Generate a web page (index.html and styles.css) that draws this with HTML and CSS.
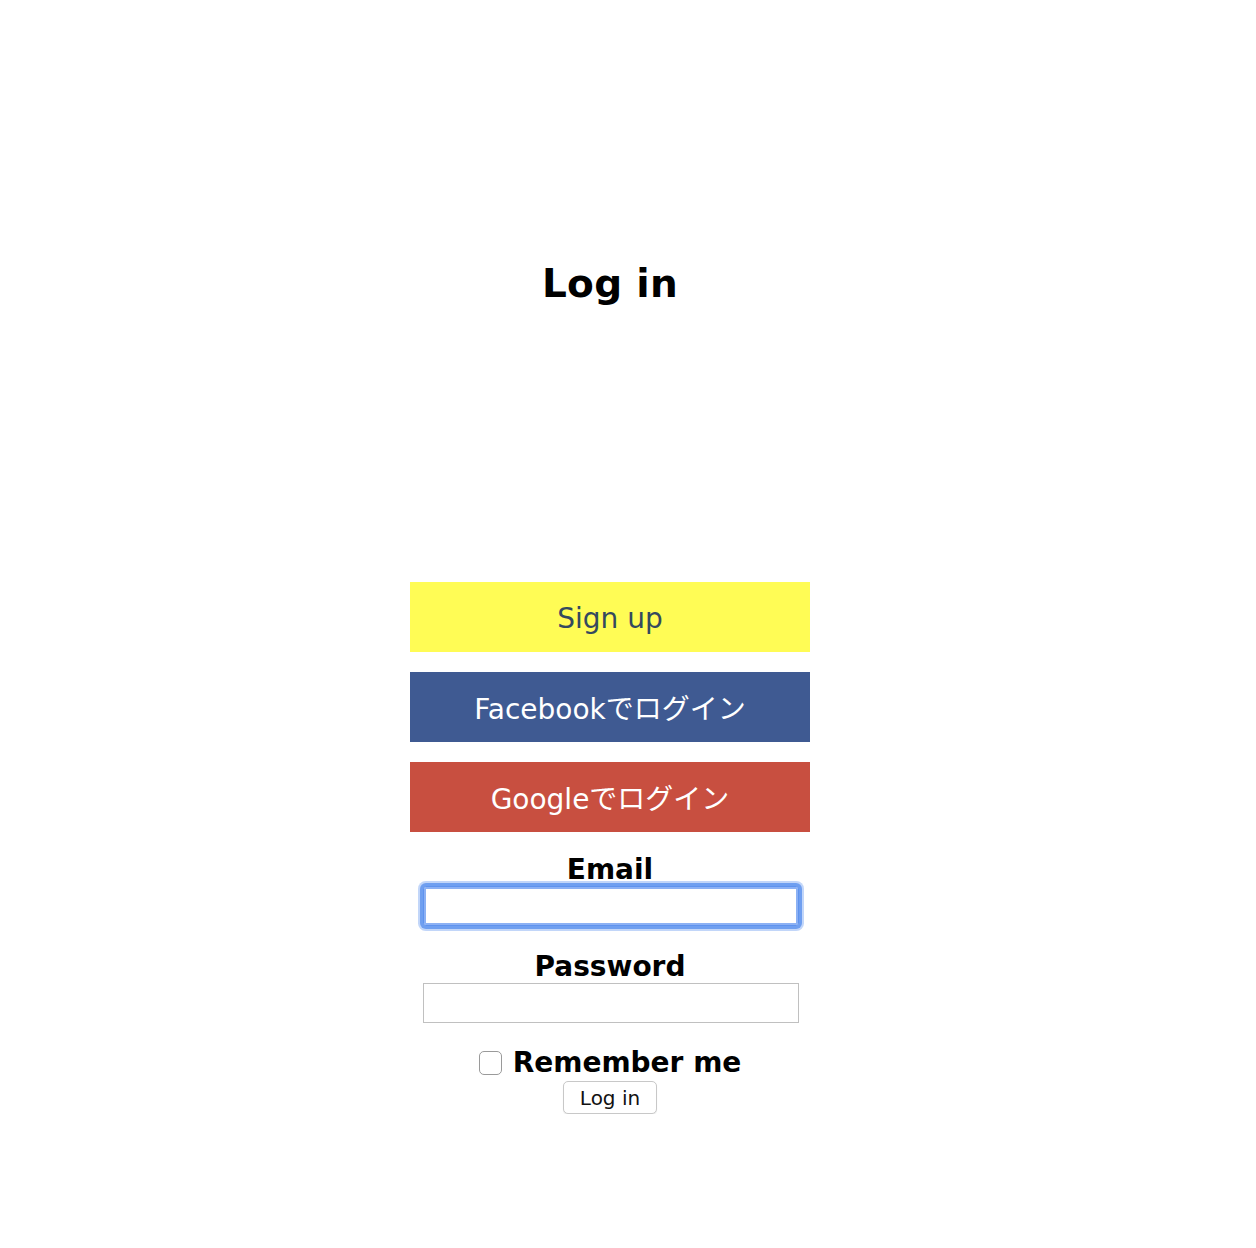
FILE: index.html
```html
<!DOCTYPE html>
<html lang="ja">
<head>
<meta charset="utf-8">
<title>Log in</title>
<link rel="stylesheet" href="styles.css">
</head>
<body>
<div class="page">
  <h1 class="title">Log in</h1>
  <div class="actions">
    <a class="btn btn-signup" href="#">Sign up</a>
    <a class="btn btn-facebook" href="#">Facebookでログイン</a>
    <a class="btn btn-google" href="#">Googleでログイン</a>
  </div>
  <form class="login-form">
    <div class="field">
      <label class="label" for="email">Email</label>
      <input class="input input-focused" id="email" type="email">
    </div>
    <div class="field field-password">
      <label class="label" for="password">Password</label>
      <input class="input" id="password" type="password">
    </div>
    <div class="remember">
      <span class="checkbox"></span>
      <label class="label">Remember me</label>
    </div>
    <button class="submit" type="button">Log in</button>
  </form>
</div>
</body>
</html>
```

FILE: styles.css
```css
html, body {
  margin: 0;
  padding: 0;
  background: #ffffff;
}

body {
  font-family: "DejaVu Sans", Verdana, "Noto Sans CJK JP", sans-serif;
  color: #000;
}

.page {
  width: 1220px;
  display: flex;
  flex-direction: column;
  align-items: center;
  padding-top: 262px;
}

.title {
  margin: 0;
  font-size: 39px;
  font-weight: bold;
  line-height: 44px;
  letter-spacing: 0.3px;
}

.actions {
  margin-top: 276px;
  display: flex;
  flex-direction: column;
  gap: 20px;
  width: 400px;
}

.btn {
  display: flex;
  align-items: center;
  justify-content: center;
  box-sizing: border-box;
  height: 70px;
  font-size: 28px;
  text-decoration: none;
  font-family: "DejaVu Sans", "Noto Sans CJK JP", sans-serif;
}

.btn-signup {
  padding-top: 2px;
  background: #fffc55;
  color: #34495e;
}

.btn-facebook {
  background: #3f5a92;
  color: #ffffff;
}

.btn-google {
  background: #c84f40;
  color: #ffffff;
}

.login-form {
  margin-top: 21px;
  display: flex;
  flex-direction: column;
  align-items: center;
  width: 400px;
}

.field {
  display: flex;
  flex-direction: column;
  align-items: center;
}

.field-password {
  margin-top: 24px;
}

.label {
  font-size: 28px;
  font-weight: bold;
  line-height: 33px;
}

.input {
  box-sizing: border-box;
  width: 376px;
  height: 40px;
  margin: 0 0 0 2px;
  border: 1px solid #c0c0c0;
  background: #fff;
  padding: 0;
  outline: none;
}

.input-focused {
  border: 1px solid #5f93ee;
  border-radius: 3px;
  box-shadow:
    inset 0 0 0 2px #8cb1f4,
    0 0 0 3px #6f9ff0,
    0 0 0 5px rgba(120, 165, 242, 0.45);
}

.remember {
  margin-top: 23px;
  display: flex;
  align-items: center;
  gap: 11px;
}

.checkbox {
  box-sizing: border-box;
  width: 23px;
  height: 24px;
  border: 1px solid #9a9a9a;
  border-radius: 5px;
  background: #fff;
  margin-top: 1px;
}

.submit {
  margin-top: 2px;
  height: 33px;
  padding: 0 16px;
  font-family: "DejaVu Sans", Verdana, sans-serif;
  font-size: 20px;
  color: #111;
  background: #ffffff;
  border: 1px solid #c8c8c8;
  border-radius: 5px;
  box-shadow: 0 1px 1px rgba(0,0,0,0.08);
}
```
